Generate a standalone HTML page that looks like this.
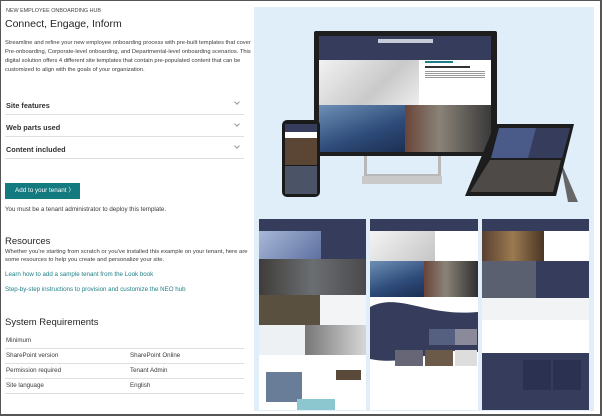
<!DOCTYPE html>
<html><head><meta charset="utf-8"><style>
*{margin:0;padding:0;box-sizing:border-box}
body{width:602px;height:416px;overflow:hidden;background:#fff;font-family:"Liberation Sans",sans-serif;color:#323130;position:relative}
.frame{position:absolute;left:0;top:0;width:602px;height:416px;border:1px solid #555;border-right:2px solid #555;border-bottom:2px solid #555}
.a{position:absolute}
.t{position:absolute;white-space:nowrap}
.p{font-size:6.2px;line-height:9px;color:#3b3a39}
.acc{position:absolute;left:5px;width:239px;height:22px;border-bottom:1px solid #e1dfdd;font-size:7.3px;font-weight:bold;color:#323130}
.acc span{position:absolute;left:1px;top:8px}
.acc i{position:absolute;right:5px;top:7px;width:4px;height:4px;border-right:1px solid #999;border-bottom:1px solid #999;transform:rotate(45deg)}
.row{position:absolute;left:5px;width:239px;height:15px;border-bottom:1px solid #e1dfdd;font-size:6.2px;color:#3b3a39}
.row span{position:absolute;top:3px;left:1px}
.row b{position:absolute;top:3px;left:125px;font-weight:normal}
.lk{color:#1f7f86;font-size:6.2px}
.nv{background:#363d5c}
</style></head><body>
<div class="t" style="left:6px;top:8px;font-size:5.4px;color:#444">NEW EMPLOYEE ONBOARDING HUB</div>
<div class="t" style="left:5px;top:18px;font-size:10.5px;color:#252423">Connect, Engage, Inform</div>
<div class="t p" style="left:5px;top:39px;font-size:5.75px">Streamline and refine your new employee onboarding process with pre-built templates that cover<br>Pre-onboarding, Corporate-level onboarding, and Departmental-level onboarding scenarios. This<br>digital solution offers 4 different site templates that contain pre-populated content that can be<br>customized to align with the goals of your organization.</div>
<div class="acc" style="top:93px"><span>Site features</span><i></i></div>
<div class="acc" style="top:115px"><span>Web parts used</span><i></i></div>
<div class="acc" style="top:137px"><span>Content included</span><i></i></div>
<div class="a" style="left:5px;top:183px;width:75px;height:16px;background:#137a7f;color:#fff;font-size:6.3px;line-height:16px;padding-left:10px">Add to your tenant 〉</div>
<div class="t p" style="left:5px;top:205px">You must be a tenant administrator to deploy this template.</div>
<div class="t" style="left:5px;top:236px;font-size:9.5px;color:#252423">Resources</div>
<div class="t p" style="left:5px;top:248px;font-size:5.9px;line-height:8px">Whether you're starting from scratch or you've installed this example on your tenant, here are<br>some resources to help you create and personalize your site.</div>
<div class="t lk" style="left:5px;top:271px">Learn how to add a sample tenant from the Look book</div>
<div class="t lk" style="left:5px;top:286px">Step-by-step instructions to provision and customize the NEO hub</div>
<div class="t" style="left:5px;top:317px;font-size:9.5px;color:#252423">System Requirements</div>
<div class="row" style="top:334px"><span>Minimum</span></div>
<div class="row" style="top:349px"><span>SharePoint version</span><b>SharePoint Online</b></div>
<div class="row" style="top:364px"><span>Permission required</span><b>Tenant Admin</b></div>
<div class="row" style="top:379px"><span>Site language</span><b>English</b></div>

<div class="a" style="left:254px;top:7px;width:340px;height:404px;background:#dfeef8"></div>
<div class="a" style="left:364px;top:155px;width:77px;height:22px;border:3px solid #b8b8b8;border-top:none"></div>
<div class="a" style="left:362px;top:176px;width:80px;height:8px;background:#c9c9c9"></div>
<div class="a" style="left:314px;top:31px;width:183px;height:125px;background:#1e1e1e;border-radius:2px"></div>
<div class="a nv" style="left:319px;top:36px;width:172px;height:24px"></div>
<div class="a" style="left:378px;top:39px;width:55px;height:4px;background:#c8ccd8"></div>
<div class="a" style="left:319px;top:60px;width:100px;height:45px;background:linear-gradient(135deg,#f2f2f2,#c9c9c9 60%,#eee)"></div>
<div class="a" style="left:419px;top:60px;width:72px;height:45px;background:#fff"></div>
<div class="a" style="left:425px;top:61px;width:28px;height:2px;background:#1f7f86"></div>
<div class="a" style="left:425px;top:66px;width:45px;height:2px;background:#333"></div>
<div class="a" style="left:425px;top:71px;width:60px;height:7px;background:repeating-linear-gradient(#999 0 1px,#fff 1px 2px)"></div>
<div class="a" style="left:319px;top:105px;width:86px;height:47px;background:linear-gradient(160deg,#6d8fb5,#2d4a78 60%,#1c2f52)"></div>
<div class="a" style="left:405px;top:105px;width:86px;height:47px;background:linear-gradient(90deg,#6a4438,#8a8378 40%,#3a3a3a)"></div>
<div class="a" style="left:282px;top:120px;width:38px;height:77px;background:#1a1a1a;border-radius:5px"></div>
<div class="a nv" style="left:285px;top:124px;width:32px;height:8px"></div>
<div class="a" style="left:285px;top:132px;width:32px;height:6px;background:#fff"></div>
<div class="a" style="left:285px;top:138px;width:32px;height:27px;background:#5b4534"></div>
<div class="a" style="left:285px;top:166px;width:32px;height:28px;background:#4b5366"></div>
<svg class="a" style="left:460px;top:120px" width="120" height="85">
<polygon points="100,40 118,82 108,82" fill="#666"/>
<polygon points="35,4 114,4 96,76 5,76" fill="#1d1d1d"/>
<polygon points="39,8 110,8 102,38 31,38" fill="#4a5b8a"/>
<polygon points="76,8 110,8 102,38 68,38" fill="#363d5c"/>
<polygon points="30,40 101,40 93,72 10,72" fill="#4d4a48"/>
</svg>
<div class="a" style="left:259px;top:219px;width:107px;height:191px;background:#fff"></div>
<div class="a nv" style="left:259px;top:219px;width:107px;height:12px"></div>
<div class="a" style="left:259px;top:231px;width:62px;height:28px;background:linear-gradient(135deg,#a8b8d8,#5e70a0)"></div>
<div class="a nv" style="left:321px;top:231px;width:45px;height:28px"></div>
<div class="a" style="left:259px;top:259px;width:107px;height:36px;background:linear-gradient(90deg,#3f3d3a,#6b6e72 50%,#4a4a4c)"></div>
<div class="a" style="left:259px;top:295px;width:61px;height:30px;background:#5a5040"></div>
<div class="a" style="left:320px;top:295px;width:46px;height:30px;background:#f3f4f6"></div>
<div class="a" style="left:259px;top:325px;width:46px;height:30px;background:#eef1f4"></div>
<div class="a" style="left:305px;top:325px;width:61px;height:30px;background:linear-gradient(90deg,#777,#d7d7d7)"></div>
<div class="a" style="left:266px;top:372px;width:36px;height:30px;background:#6a7d98"></div>
<div class="a" style="left:336px;top:370px;width:25px;height:10px;background:#5a4a3a"></div>
<div class="a" style="left:297px;top:399px;width:38px;height:11px;background:#8cc6cf"></div>
<div class="a" style="left:370px;top:219px;width:108px;height:191px;background:#fff"></div>
<div class="a nv" style="left:370px;top:219px;width:108px;height:12px"></div>
<div class="a" style="left:370px;top:231px;width:65px;height:30px;background:linear-gradient(135deg,#f4f4f4,#c5c5c5)"></div>
<div class="a" style="left:370px;top:261px;width:54px;height:36px;background:linear-gradient(160deg,#6d8fb5,#2d4a78 60%,#1c2f52)"></div>
<div class="a" style="left:424px;top:261px;width:54px;height:36px;background:linear-gradient(90deg,#6a4438,#8a8378 40%,#2f2f2f)"></div>
<svg class="a" style="left:370px;top:297px" width="108" height="70"><path d="M0,10 C30,-5 55,20 108,15 L108,55 C70,48 40,70 0,62 Z" fill="#363d5c"/></svg>
<div class="a" style="left:429px;top:329px;width:28px;height:16px;background:#556080"></div>
<div class="a" style="left:455px;top:329px;width:22px;height:16px;background:#8a8a9a"></div>
<div class="a" style="left:395px;top:350px;width:28px;height:16px;background:#667"></div>
<div class="a" style="left:425px;top:350px;width:28px;height:16px;background:#6b5a48"></div>
<div class="a" style="left:455px;top:350px;width:22px;height:16px;background:#ddd"></div>
<div class="a" style="left:482px;top:219px;width:107px;height:191px;background:#fff"></div>
<div class="a nv" style="left:482px;top:219px;width:107px;height:12px"></div>
<div class="a" style="left:482px;top:231px;width:62px;height:30px;background:linear-gradient(90deg,#5a4030,#9a7a50,#4a3525)"></div>
<div class="a nv" style="left:482px;top:261px;width:107px;height:37px"></div>
<div class="a" style="left:482px;top:261px;width:54px;height:37px;background:#5a6070"></div>
<div class="a" style="left:482px;top:298px;width:107px;height:22px;background:#f2f3f5"></div>
<div class="a nv" style="left:482px;top:353px;width:107px;height:57px"></div>
<div class="a" style="left:523px;top:360px;width:28px;height:30px;background:#2b3150"></div>
<div class="a" style="left:553px;top:360px;width:28px;height:30px;background:#2b3150"></div>
<div class="frame"></div>
</body></html>
